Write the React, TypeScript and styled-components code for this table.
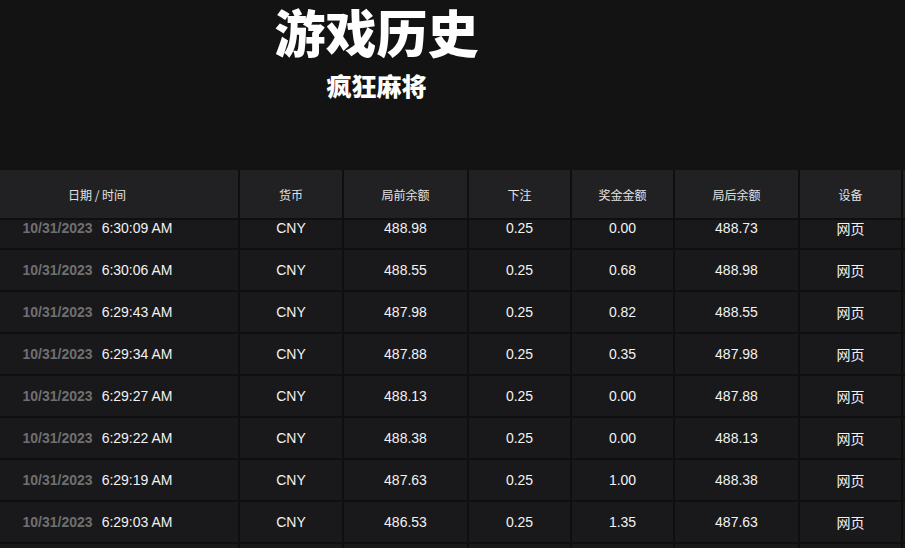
import React, { useLayoutEffect, useRef } from 'react'
import styled, { createGlobalStyle } from 'styled-components'

const GlobalStyle = createGlobalStyle`
  html, body {
    margin: 0;
    padding: 0;
    background: #131313;
    overflow: hidden;
  }
  body {
    font-family: 'Liberation Sans', Arial, 'Noto Sans CJK SC', sans-serif;
    color: #f0f0f0;
  }
`

const COLS = '240px 104px 125px 103px 103px 125px 103px'

const Page = styled.div`
  width: 905px;
  height: 548px;
  display: flex;
  flex-direction: column;
  background: #131313;
`

const TitleBlock = styled.div`
  height: 170px;
  box-sizing: border-box;
  padding: 2px 152px 0 0;
  display: flex;
  flex-direction: column;
  align-items: center;
  font-family: 'Noto Sans CJK SC', sans-serif;
  color: #ffffff;
`

const Title = styled.h1`
  margin: 0;
  font-size: 51px;
  line-height: 58px;
  font-weight: 900;
`

const SubTitle = styled.h2`
  margin: 10px 0 0;
  font-size: 25px;
  line-height: 30px;
  font-weight: 900;
`

const TableScroll = styled.div`
  flex: 1;
  overflow: hidden;
  scrollbar-width: none;
`

const Row = styled.div<{ $head?: boolean }>`
  display: grid;
  grid-template-columns: ${COLS};
  height: ${({ $head }) => ($head ? '50px' : '42px')};
  background: ${({ $head }) => ($head ? '#212123' : '#19191b')};
  border-bottom: 2px solid #0f0f10;
  box-sizing: border-box;
  ${({ $head }) => ($head ? 'position: sticky; top: 0; z-index: 2;' : '')}
`

const Cell = styled.div<{ $padRight?: number; $head?: boolean }>`
  display: flex;
  align-items: center;
  justify-content: center;
  border-right: 2px solid #0f0f10;
  padding-right: ${({ $padRight }) => $padRight ?? 0}px;
  font-family: ${({ $head }) =>
    $head ? "'Noto Sans CJK SC', sans-serif" : "'Liberation Sans', 'Noto Sans CJK SC', sans-serif"};
  font-size: ${({ $head }) => ($head ? '12px' : '14px')};
  color: ${({ $head }) => ($head ? '#e2e2e2' : '#f2f2f2')};
  white-space: nowrap;
`

const DatePart = styled.span`
  color: #6f6f70;
  font-weight: 700;
  margin-right: 9px;
`

const headers = ['日期 / 时间', '货币', '局前余额', '下注', '奖金金额', '局后余额', '设备']

const rows = [
  ['6:30:09 AM', '488.98', '0.25', '0.00', '488.73'],
  ['6:30:06 AM', '488.55', '0.25', '0.68', '488.98'],
  ['6:29:43 AM', '487.98', '0.25', '0.82', '488.55'],
  ['6:29:34 AM', '487.88', '0.25', '0.35', '487.98'],
  ['6:29:27 AM', '488.13', '0.25', '0.00', '487.88'],
  ['6:29:22 AM', '488.38', '0.25', '0.00', '488.13'],
  ['6:29:19 AM', '487.63', '0.25', '1.00', '488.38'],
  ['6:29:03 AM', '486.53', '0.25', '1.35', '487.63'],
  ['6:28:51 AM', '486.78', '0.25', '0.00', '486.53'],
  ['6:28:40 AM', '487.03', '0.25', '0.00', '486.78'],
]

export default function App() {
  const scrollRef = useRef<HTMLDivElement>(null)

  // the list is scrolled a little under the sticky header, as in the reference
  useLayoutEffect(() => {
    if (scrollRef.current) scrollRef.current.scrollTop = 12
  }, [])

  return (
    <Page>
      <GlobalStyle />
      <TitleBlock>
        <Title>游戏历史</Title>
        <SubTitle>疯狂麻将</SubTitle>
      </TitleBlock>
      <TableScroll ref={scrollRef}>
        <Row $head>
          {headers.map((h, i) => (
            <Cell key={h} $head $padRight={i === 0 ? 44 : 0}>
              {h}
            </Cell>
          ))}
        </Row>
        {rows.map(([time, before, bet, win, after]) => (
          <Row key={time}>
            <Cell $padRight={43}>
              <DatePart>10/31/2023</DatePart>
              {time}
            </Cell>
            <Cell>CNY</Cell>
            <Cell>{before}</Cell>
            <Cell>{bet}</Cell>
            <Cell>{win}</Cell>
            <Cell>{after}</Cell>
            <Cell>网页</Cell>
          </Row>
        ))}
      </TableScroll>
    </Page>
  )
}
